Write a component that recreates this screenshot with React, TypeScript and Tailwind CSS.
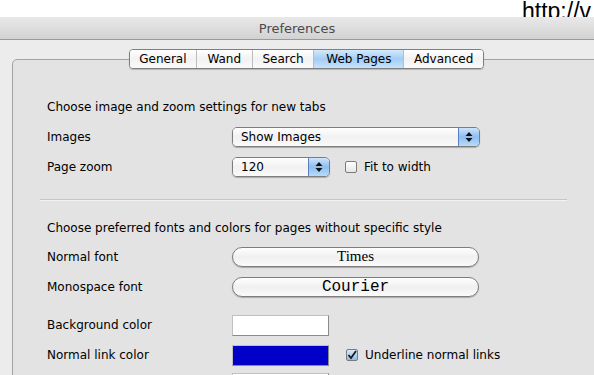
import React from "react";

const ui = { fontFamily: '"DejaVu Sans", "Noto Sans", sans-serif' };

const tabs = [
  { name: "General", w: "w-[66px]" },
  { name: "Wand", w: "w-[56px]" },
  { name: "Search", w: "w-[62px]" },
  { name: "Web Pages", w: "w-[90px]", active: true },
  { name: "Advanced", w: "w-[80px]" },
];

const Arrows = () => (
  <svg width="8" height="12" viewBox="0 0 8 12">
    <path d="M4 1 L7.5 5 L0.5 5 Z" fill="#111" />
    <path d="M4 11 L7.5 7 L0.5 7 Z" fill="#111" />
  </svg>
);

const Popup = ({ label, w }: { label: string; w: string }) => (
  <div
    className={`${w} h-[20px] flex items-stretch rounded-[5px] border border-[#7d7d7d] overflow-hidden shadow-[0_1px_1px_rgba(0,0,0,0.25)]`}
  >
    <div className="flex-1 flex items-center pl-[8px] text-[12px] text-black bg-gradient-to-b from-[#ffffff] via-[#f1f1f1] to-[#fafafa]">
      {label}
    </div>
    <div className="w-[21px] flex items-center justify-center bg-gradient-to-b from-[#cfe3fb] via-[#8dbdf0] to-[#b9dcfb] border-l border-[#5a7fc0]">
      <Arrows />
    </div>
  </div>
);

const Checkbox = ({ checked }: { checked?: boolean }) => (
  <div
    className={`w-[12px] h-[12px] rounded-[2px] border border-[#7b7b7b] flex items-center justify-center ${
      checked
        ? "bg-gradient-to-b from-[#d6e8fb] to-[#8fbdec]"
        : "bg-gradient-to-b from-[#ffffff] to-[#e6e6e6]"
    }`}
  >
    {checked && (
      <svg width="10" height="10" viewBox="0 0 10 10">
        <path d="M1.5 5 L4 8 L9 1" stroke="#1a1a1a" strokeWidth="1.8" fill="none" />
      </svg>
    )}
  </div>
);

const FontButton = ({ children, family }: { children: React.ReactNode; family: string }) => (
  <div
    className="w-[247px] h-[20px] rounded-full border border-[#7d7d7d] flex items-center justify-center bg-gradient-to-b from-[#ffffff] via-[#f0f0f0] to-[#fbfbfb] shadow-[0_1px_1px_rgba(0,0,0,0.25)] text-black"
    style={{ fontFamily: family }}
  >
    {children}
  </div>
);

const Row = ({ label, h, children }: { label: string; h: string; children?: React.ReactNode }) => (
  <div className={`flex items-center ${h}`}>
    <div className="w-[185px] text-[12px] text-black">{label}</div>
    {children}
  </div>
);

export default function App() {
  return (
    <div className="w-[594px] h-[375px] overflow-hidden bg-[#ececec] flex flex-col" style={ui}>
      <div className="h-[17px] bg-white overflow-hidden relative shrink-0">
        <div
          className="absolute left-[522px] top-[-1px] text-[23px] leading-[24px] text-black whitespace-nowrap"
          style={{ fontFamily: '"Liberation Sans", Arial, sans-serif' }}
        >
          http://v
        </div>
      </div>
      <div className="h-[23px] shrink-0 flex items-center justify-center pt-[2px] bg-gradient-to-b from-[#e9e9e9] to-[#d2d2d2] border-b border-[#9a9a9a] text-[13px] text-[#4a4a4a]">
        Preferences
      </div>
      <div className="flex flex-col">
        <div className="relative z-10 flex ml-[129px] mt-[9px] h-[20px] rounded-[4px] border border-[#7e7e7e] overflow-hidden w-[355px] shadow-[0_1px_1px_rgba(0,0,0,0.2)]">
          {tabs.map((t, i) => (
            <div
              key={t.name}
              className={`${t.w} flex items-center justify-center text-[12px] text-black ${
                i > 0 ? "border-l border-[#bdbdbd]" : ""
              } ${
                t.active
                  ? "bg-gradient-to-b from-[#d4e9fc] via-[#a3ccf4] to-[#c7e3fd]"
                  : "bg-gradient-to-b from-[#ffffff] via-[#f2f2f2] to-[#fafafa]"
              }`}
            >
              {t.name}
            </div>
          ))}
        </div>
        <div className="-mt-[10px] ml-[12px] w-[620px] h-[400px] rounded-[5px] border border-[#a3a3a3] bg-[#e3e3e3] pl-[34px] pt-[36px]">
          <div className="text-[12px] text-black h-[22px] flex items-center">
            Choose image and zoom settings for new tabs
          </div>
          <Row label="Images" h="h-[30px] mt-[4px]">
            <Popup label="Show Images" w="w-[248px]" />
          </Row>
          <Row label="Page zoom" h="h-[30px]">
            <Popup label="120" w="w-[98px]" />
            <div className="ml-[15px]">
              <Checkbox />
            </div>
            <span className="ml-[7px] text-[12px] text-black">Fit to width</span>
          </Row>
          <div className="mt-[17px] w-[527px] -ml-[7px] h-[2px] border-t border-[#c6c6c6] border-b border-b-[#f2f2f2]" />
          <div className="mt-[16px] text-[12px] text-black h-[22px] flex items-center">
            Choose preferred fonts and colors for pages without specific style
          </div>
          <Row label="Normal font" h="h-[30px] mt-[3px]">
            <FontButton family='"Liberation Serif", "Times New Roman", serif'>
              <span className="text-[15px] leading-[18px] -mt-[2px]">Times</span>
            </FontButton>
          </Row>
          <Row label="Monospace font" h="h-[30px]">
            <FontButton family='"Liberation Mono", "Courier New", monospace'>
              <span className="text-[16px] leading-[18px]">Courier</span>
            </FontButton>
          </Row>
          <Row label="Background color" h="h-[30px] mt-[8px]">
            <div className="w-[97px] h-[21px] bg-white border border-[#8a8a8a] border-t-[#c0c0c0] border-l-[#c0c0c0]" />
          </Row>
          <Row label="Normal link color" h="h-[30px]">
            <div className="w-[97px] h-[21px] bg-[#0000c8] border border-[#8a8a8a] border-t-[#c0c0c0] border-l-[#c0c0c0]" />
            <div className="ml-[17px]">
              <Checkbox checked />
            </div>
            <span className="ml-[7px] text-[12px] text-black">Underline normal links</span>
          </Row>
          <Row label="" h="h-[26px]">
            <div className="w-[97px] h-[21px] bg-white border border-[#8a8a8a] border-t-[#c0c0c0] border-l-[#c0c0c0]" />
          </Row>
        </div>
      </div>
    </div>
  );
}
